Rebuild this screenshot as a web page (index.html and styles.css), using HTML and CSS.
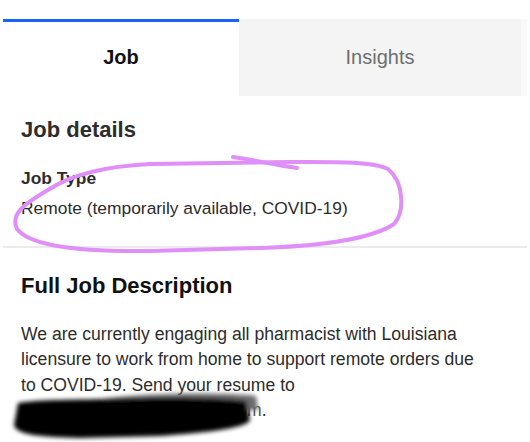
FILE: index.html
```html
<!DOCTYPE html>
<html lang="en">
<head>
<meta charset="utf-8">
<title>Job</title>
<link rel="stylesheet" href="styles.css">
</head>
<body>
<div class="page">
  <nav class="tabs">
    <div class="tab tab-active">Job</div>
    <div class="tab tab-idle">Insights</div>
  </nav>
  <section class="details">
    <h2 class="h-details">Job details</h2>
    <h3 class="label">Job Type</h3>
    <p class="value">Remote (temporarily available, COVID-19)</p>
  </section>
  <hr class="divider">
  <section class="desc">
    <h2 class="h-desc">Full Job Description</h2>
    <p class="body-text">We are currently engaging all pharmacist with Louisiana licensure to work from home to support remote orders due to COVID-19. Send your resume to <span class="hidden-mail">xxxxxxxxxxxxxx@xxxxxxx.com</span>.</p>
  </section>
  <svg class="markup" width="530" height="442" viewBox="0 0 530 442" aria-hidden="true">
    <defs>
      <filter id="smear" x="-10%" y="-50%" width="120%" height="200%">
        <feGaussianBlur stdDeviation="2.2"/>
      </filter>
    </defs>
    <g fill="none" stroke="#e08ef8" stroke-width="4" stroke-linecap="round" stroke-linejoin="round">
      <path d="M 150 164 C 110 166, 72 174, 48 190 C 24 204, 10 214, 17 229 C 30 246, 80 252, 150 251 L 260 248 C 320 246, 370 240, 394 224 C 405 212, 404 182, 388 169 C 372 161, 330 162, 290 162 L 150 164"/>
      <path d="M 233 157 C 255 160, 275 165, 297 168"/>
    </g>
    <g filter="url(#smear)">
      <path fill="#6a6a6a" d="M 100 399 C 150 393, 220 392, 256 396 L 258 410 L 100 410 Z"/>
      <path fill="#000" d="M 18 403 C 40 399, 80 400, 105 399 C 150 397, 220 397, 246 401 L 250 420 C 246 429, 200 433, 160 436 L 80 438 C 40 437, 16 435, 14 425 Z"/>
    </g>
  </svg>
</div>
</body>
</html>
```

FILE: styles.css
```css
html, body {
  margin: 0;
  padding: 0;
  background: #fff;
}

body {
  font-family: "Liberation Sans", Arial, sans-serif;
  color: #2d2d2d;
}

.page {
  position: relative;
  width: 530px;
  height: 442px;
  overflow: hidden;
  box-sizing: border-box;
  padding: 19px 3px 0 3px;
}

.tabs {
  display: grid;
  grid-template-columns: 236px 282px;
  height: 77px;
}

.tab {
  display: flex;
  align-items: center;
  justify-content: center;
  font-size: 20px;
  box-sizing: border-box;
}

.tab-active {
  border-top: 3px solid #1a62ff;
  font-weight: bold;
  color: #111;
  padding-bottom: 3px;
}

.tab-idle {
  background: #f4f4f4;
  color: #6e6e6e;
  box-shadow: 6px 0 0 #f9f9f9;
}

.details {
  padding: 20px 18px 0 18px;
}

.h-details,
.h-desc {
  margin: 0;
  font-size: 22px;
  line-height: 28px;
  font-weight: bold;
}

.h-details {
  color: #2d2d2d;
}

.h-desc {
  color: #111;
}

.label {
  margin: 22px 0 0 0;
  font-size: 17.4px;
  line-height: 24px;
  font-weight: bold;
  color: #2d2d2d;
}

.value {
  margin: 6px 0 0 0;
  font-size: 17.4px;
  line-height: 24px;
  color: #2d2d2d;
}

.divider {
  margin: 26px 0 0 0;
  border: 0;
  height: 2px;
  background: #ebebeb;
}

.desc {
  padding: 24px 18px 0 18px;
}

.body-text {
  margin: 22px 0 0 0;
  max-width: 465px;
  font-size: 17.6px;
  line-height: 25.3px;
  color: #2d2d2d;
}

.hidden-mail {
  color: #555;
}

.markup {
  position: absolute;
  left: 0;
  top: 0;
  pointer-events: none;
}
```
